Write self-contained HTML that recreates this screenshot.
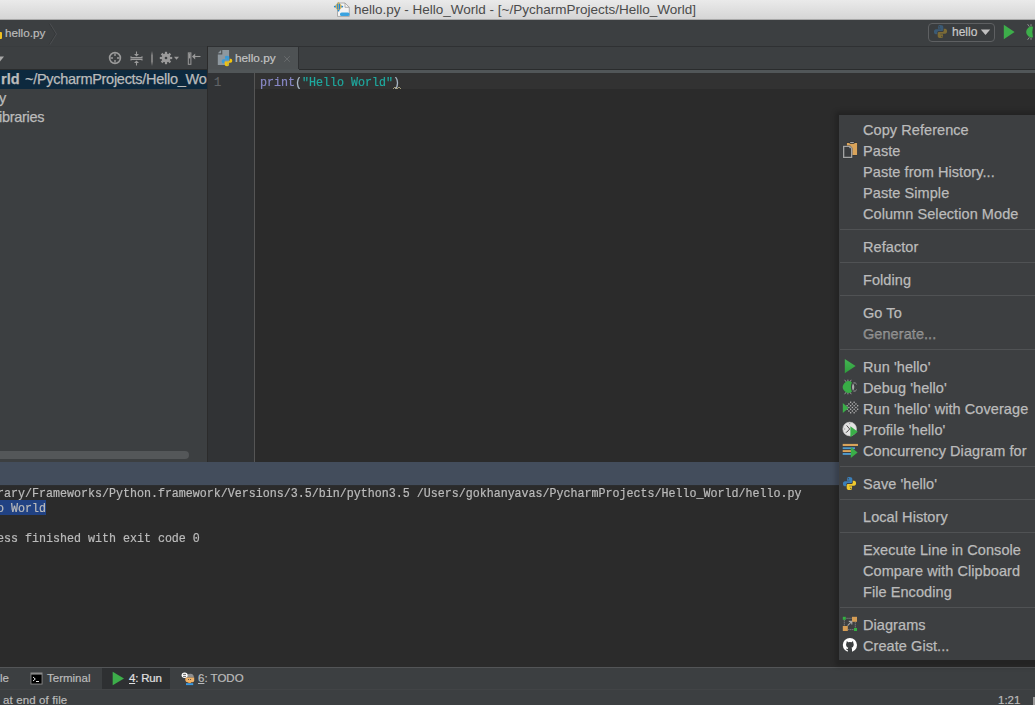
<!DOCTYPE html><html><head><meta charset="utf-8"><style>
*{margin:0;padding:0;box-sizing:border-box}
html,body{width:1035px;height:705px;overflow:hidden;background:#3C3F41;font-family:"Liberation Sans",sans-serif;position:relative}
.a{position:absolute;display:block}
.mono{font-family:"Liberation Mono",monospace}
.txt{color:#BBBBBB;white-space:nowrap;-webkit-text-stroke:0.2px currentColor}
.mi{position:absolute;left:24px;height:21px;line-height:21px;font-size:14.5px;letter-spacing:0.07px;color:#BBBBBB;white-space:nowrap;-webkit-text-stroke:0.25px #BBBBBB}
.sep{position:absolute;left:1px;width:300px;height:1px;background:#505254}
.tr{position:absolute;height:19px;line-height:19px;font-size:14.5px;letter-spacing:-0.28px;color:#BBBBBB;white-space:nowrap;-webkit-text-stroke:0.25px #BBBBBB}
</style></head><body>
<div class="a" style="left:0;top:0;width:1035px;height:20px;background:linear-gradient(#EAEAEA,#D4D4D4)"></div>
<div class="a" style="left:0;top:19px;width:1035px;height:1px;background:#A8A8A8"></div>
<svg class="a" style="left:333px;top:1px" width="18" height="17" viewBox="0 0 18 17"><path d="M4.5 2H12L16.3 6.3V15.4H4.5Z" fill="#F4F4F4" stroke="#9C9C9C" stroke-width="0.8"/><path d="M12 2V6.3H16.3" fill="none" stroke="#9C9C9C" stroke-width="0.8"/><rect x="7" y="11.5" width="9.5" height="3.6" rx="1.6" fill="#3BA3E0"/><path d="M5.5 0.8L9.6 5.6L5.5 10.4L1.4 5.6Z" fill="#C9B26A"/><rect x="4.2" y="2.8" width="1" height="5.6" fill="#1E88D8"/><rect x="6" y="2.8" width="1" height="5.6" fill="#1E88D8"/><circle cx="1.8" cy="5.6" r="0.9" fill="#1E88D8"/><circle cx="9.3" cy="5.6" r="0.9" fill="#1E88D8"/><circle cx="5.5" cy="9.6" r="0.9" fill="#1E88D8"/></svg>
<div class="a" style="left:354px;top:2px;font-size:13.5px;line-height:16px;color:#4B4B4B;white-space:nowrap">hello.py - Hello_World - [~/PycharmProjects/Hello_World]</div>
<div class="a" style="left:0;top:20px;width:1035px;height:26px;background:#3C3F41"></div>
<div class="a" style="left:-2px;top:32px;width:4px;height:7px;background:#F0C020;border-radius:1px"></div>
<div class="a txt" style="left:5px;top:25px;font-size:11.7px;line-height:16px">hello.py</div>
<svg class="a" style="left:48px;top:23px" width="10" height="22" viewBox="0 0 10 22"><path d="M1 0.5L7.5 11L1 21.5" fill="none" stroke="#35383A" stroke-width="1"/><path d="M2 0.5L8.5 11L2 21.5" fill="none" stroke="#505355" stroke-width="0.8"/></svg>
<div class="a" style="left:928px;top:23px;width:67px;height:19px;border:1px solid #5E6062;border-radius:4px;background:#3A3D3F"></div>
<svg class="a" style="left:933px;top:24px" width="15" height="15" viewBox="0 0 16 16"><path d="M8 1C5.2 1 5.3 2.2 5.3 3.2V5H8.3V5.6H3.2C1.8 5.6 1 6.8 1 8.3C1 9.9 1.7 11 3 11H4.5V9.2C4.5 8.1 5.3 7.4 6.3 7.4H9.5C10.4 7.4 11 6.7 11 5.8V3.2C11 2 10.1 1 8 1Z" fill="#3B5A74"/><path d="M8 15C10.8 15 10.7 13.8 10.7 12.8V11H7.7V10.4H12.8C14.2 10.4 15 9.2 15 7.7C15 6.1 14.3 5 13 5H11.5V6.8C11.5 7.9 10.7 8.6 9.7 8.6H6.5C5.6 8.6 5 9.3 5 10.2V12.8C5 14 5.9 15 8 15Z" fill="#7C6B36"/><circle cx="6.6" cy="2.9" r="0.7" fill="#3C3F41"/><circle cx="9.4" cy="13.1" r="0.7" fill="#3C3F41"/></svg>
<div class="a txt" style="left:952px;top:24px;font-size:12px;line-height:16px;color:#C8C8C8">hello</div>
<svg class="a" style="left:980px;top:29px" width="11" height="7" viewBox="0 0 11 7"><path d="M0.8 0.5H10.2L5.5 6Z" fill="#C0C0C0"/></svg>
<svg class="a" style="left:1003px;top:24px" width="13" height="16" viewBox="0 0 13 16"><path d="M0.8 0.8L11.6 8L0.8 15.2Z" fill="#3DAE4A"/></svg>
<svg class="a" style="left:1024px;top:23px" width="14" height="18" viewBox="0 0 14 18"><g stroke="#9A9A9A" stroke-width="0.9"><path d="M3.6 1.2L5.4 3.6M3.6 16.8L5.4 14.4M7 1.2V3.4M7 16.8V14.6"/></g><path d="M9 3.8A5.4 5.4 0 1 0 9 14.2Q7.6 9 9 3.8Z" fill="#3DAE4A"/></svg>
<div class="a" style="left:0;top:46px;width:207px;height:1px;background:#393C3E"></div>
<div class="a" style="left:207px;top:46px;width:828px;height:1px;background:#2F3133"></div>
<svg class="a" style="left:-4px;top:56px" width="8" height="6" viewBox="0 0 8 6"><path d="M0 0.5H8L4 5.5Z" fill="#A8A8A8"/></svg>
<svg class="a" style="left:108px;top:51px" width="14" height="14" viewBox="0 0 14 14"><circle cx="7" cy="7" r="5.4" fill="none" stroke="#9A9A9A" stroke-width="1.6"/><path d="M7 2.5V5M7 9V11.5M2.5 7H5M9 7H11.5" stroke="#9A9A9A" stroke-width="1.4"/></svg>
<svg class="a" style="left:130px;top:51px" width="13" height="15" viewBox="0 0 13 15"><path d="M1 5.2V6.6H12V5.2M1 9.6V8.4H12V9.6" fill="none" stroke="#9A9A9A" stroke-width="1.1"/><path d="M6.5 0.5V5" stroke="#9A9A9A" stroke-width="1.1"/><path d="M4 3L9 3L6.5 5.6Z" fill="#9A9A9A"/><path d="M6.5 10V14.5" stroke="#9A9A9A" stroke-width="1.1"/><path d="M4 12L9 12L6.5 9.4Z" fill="#9A9A9A"/></svg>
<div class="a" style="left:151px;top:51px;width:2px;height:15px;background:linear-gradient(#3C3F41,#7E7E7E 30%,#7E7E7E 70%,#3C3F41)"></div>
<svg class="a" style="left:159px;top:51px" width="22" height="14" viewBox="0 0 22 14"><g fill="#9A9A9A"><circle cx="7" cy="7" r="4.4"/><rect x="5.9" y="0.8" width="2.2" height="12.4"/><rect x="0.8" y="5.9" width="12.4" height="2.2"/><rect x="5.9" y="0.8" width="2.2" height="12.4" transform="rotate(45 7 7)"/><rect x="0.8" y="5.9" width="12.4" height="2.2" transform="rotate(45 7 7)"/></g><circle cx="7" cy="7" r="1.3" fill="#3C3F41"/><path d="M15 5.8H20L17.5 8.8Z" fill="#9A9A9A"/></svg>
<svg class="a" style="left:187px;top:52px" width="15" height="13" viewBox="0 0 15 13"><rect x="1.3" y="0.9" width="2.6" height="11.4" fill="none" stroke="#9A9A9A" stroke-width="1"/><rect x="1.8" y="1.4" width="1.6" height="5" fill="#9A9A9A"/><path d="M6 4.5H13.5" stroke="#9A9A9A" stroke-width="1.1"/><path d="M5 4.5L8.2 1.6V7.4Z" fill="#9A9A9A"/></svg>
<div class="a" style="left:207px;top:46px;width:1px;height:416px;background:#2B2B2B"></div>
<div class="a" style="left:208px;top:47px;width:90px;height:23px;background:#4E5254"></div>
<div class="a" style="left:298px;top:47px;width:1px;height:23px;background:#2F3133"></div>
<div class="a" style="left:0;top:69px;width:208px;height:1px;background:#2A2C2D"></div>
<div class="a" style="left:299px;top:69px;width:736px;height:1px;background:#2A2C2D"></div>
<div class="a" style="left:208px;top:69px;width:91px;height:1px;background:#4F5456"></div>
<div class="a" style="left:208px;top:70px;width:827px;height:3px;background:#515658"></div>
<svg class="a" style="left:217px;top:49px" width="17" height="18" viewBox="0 0 17 18"><path d="M5.3 1H12.1V16H0.8V5.5H5.3Z" fill="#8E989F"/><path d="M0.8 4.3L4.1 1V4.3Z" fill="#8E989F"/></svg>
<svg class="a" style="left:221px;top:55px" width="12" height="12" viewBox="0 0 16 16"><path d="M8 1C5.2 1 5.3 2.2 5.3 3.2V5H8.3V5.6H3.2C1.8 5.6 1 6.8 1 8.3C1 9.9 1.7 11 3 11H4.5V9.2C4.5 8.1 5.3 7.4 6.3 7.4H9.5C10.4 7.4 11 6.7 11 5.8V3.2C11 2 10.1 1 8 1Z" fill="#3A9AD6"/><path d="M8 15C10.8 15 10.7 13.8 10.7 12.8V11H7.7V10.4H12.8C14.2 10.4 15 9.2 15 7.7C15 6.1 14.3 5 13 5H11.5V6.8C11.5 7.9 10.7 8.6 9.7 8.6H6.5C5.6 8.6 5 9.3 5 10.2V12.8C5 14 5.9 15 8 15Z" fill="#F2C40C"/><circle cx="6.6" cy="2.9" r="0.7" fill="#3A9AD6"/><circle cx="9.4" cy="13.1" r="0.7" fill="#3A9AD6"/></svg>
<div class="a txt" style="left:235px;top:50px;font-size:11.8px;line-height:16px;color:#C4C4C4">hello.py</div>
<svg class="a" style="left:283px;top:55px" width="8" height="8" viewBox="0 0 8 8"><path d="M1.2 1.2L6.8 6.8M6.8 1.2L1.2 6.8" stroke="#676A6C" stroke-width="1"/></svg>
<div class="a" style="left:0;top:70px;width:207px;height:19px;background:#0D293E"></div>
<div class="tr" style="left:1px;top:70px;font-weight:bold;letter-spacing:0px">rld</div>
<div class="a" style="left:0;top:70px;width:207px;height:19px;overflow:hidden"><div class="tr" style="left:25px;top:0">~/PycharmProjects/Hello_World</div></div>
<div class="tr" style="left:-1px;top:89px">y</div>
<div class="tr" style="left:-1px;top:108px">ibraries</div>
<div class="a" style="left:-10px;top:451px;width:199px;height:8px;border-radius:4px;background:#545759"></div>
<div class="a" style="left:208px;top:73px;width:46px;height:389px;background:#313335"></div>
<div class="a" style="left:254px;top:73px;width:1px;height:389px;background:#555555"></div>
<div class="a" style="left:255px;top:73px;width:780px;height:389px;background:#2B2B2B"></div>
<div class="a" style="left:208px;top:73px;width:46px;height:16px;background:#313335"></div>
<div class="a" style="left:255px;top:73px;width:780px;height:16px;background:#323232"></div>
<div class="a mono" style="left:214px;top:76px;font-size:12px;line-height:15px;color:#606366;-webkit-text-stroke:0.2px currentColor">1</div>
<div class="a mono" style="left:260px;top:76px;font-size:11.67px;line-height:15px;color:#A9B7C6;white-space:pre;-webkit-text-stroke:0.2px currentColor;transform:scaleY(1.1);transform-origin:0 10.6px"><span style="color:#8888C6">print</span>(<span style="color:#1FA99F">"Hello World"</span>)</div>
<svg class="a" style="left:393px;top:86px" width="8" height="4" viewBox="0 0 8 4"><path d="M0 3L2 1L4 3L6 1L8 3" fill="none" stroke="#BCB48A" stroke-width="0.8"/></svg>
<div class="a" style="left:0;top:462px;width:1035px;height:23px;background:#434D5C"></div>
<div class="a" style="left:0;top:485px;width:1035px;height:1px;background:#2C2E30"></div>
<div class="a" style="left:0;top:486px;width:1035px;height:181px;background:#2B2B2B"></div>
<div class="a mono" style="left:-3px;top:487px;font-size:11.67px;line-height:15px;color:#BBBBBB;white-space:pre;-webkit-text-stroke:0.2px #BBBBBB;transform:scaleY(1.1);transform-origin:0 10.6px">rary/Frameworks/Python.framework/Versions/3.5/bin/python3.5 /Users/gokhanyavas/PycharmProjects/Hello_World/hello.py</div>
<div class="a" style="left:0;top:500px;width:46px;height:15px;background:#214283"></div>
<div class="a mono" style="left:-3px;top:502px;font-size:11.67px;line-height:15px;color:#BBBBBB;white-space:pre;-webkit-text-stroke:0.2px #BBBBBB;transform:scaleY(1.1);transform-origin:0 10.6px">o World</div>
<div class="a mono" style="left:-3px;top:532px;font-size:11.67px;line-height:15px;color:#BBBBBB;white-space:pre;-webkit-text-stroke:0.2px #BBBBBB;transform:scaleY(1.1);transform-origin:0 10.6px">ess finished with exit code 0</div>
<div class="a" style="left:0;top:667px;width:1035px;height:22px;background:#3C3F41"></div>
<div class="a" style="left:0;top:667px;width:1035px;height:1px;background:#535557"></div>
<div class="a" style="left:102px;top:668px;width:68px;height:21px;background:#2E3032"></div>
<div class="a" style="left:0px;top:670px;font-size:11.5px;line-height:16px;color:#BBBBBB;white-space:nowrap;-webkit-text-stroke:0.2px currentColor">le</div>
<svg class="a" style="left:30px;top:672px" width="13" height="13" viewBox="0 0 13 13"><rect x="0.5" y="0.5" width="12" height="12" fill="#8A8A8A"/><rect x="1.4" y="2.6" width="10.2" height="9" fill="#000"/><path d="M3 5L5.3 7L3 9" fill="none" stroke="#FFF" stroke-width="0.9"/><path d="M6 9.5H9" stroke="#FFF" stroke-width="0.9"/></svg>
<div class="a" style="left:47px;top:670px;font-size:11.5px;line-height:16px;color:#BBBBBB;white-space:nowrap;-webkit-text-stroke:0.2px currentColor">Terminal</div>
<svg class="a" style="left:112px;top:671px" width="13" height="15" viewBox="0 0 13 15"><path d="M0.7 0.7L12 7.5L0.7 14.3Z" fill="#3DAE4A"/></svg>
<div class="a" style="left:129px;top:670px;font-size:11.5px;line-height:16px;color:#BBBBBB;white-space:nowrap;-webkit-text-stroke:0.2px currentColor;color:#E0E0E0;letter-spacing:-0.2px"><u>4</u>: Run</div>
<svg class="a" style="left:181px;top:672px" width="15" height="15" viewBox="0 0 15 15"><path d="M5.2 3.6Q5.4 1.8 9.4 1.8Q12.9 1.9 12.9 5.6H5.6Z" fill="#8E8E8E"/><path d="M4.6 5.4H13.2V8.6Q13.2 10.3 11.5 10.3H6.2Q4.6 10.3 4.6 8.6Z" fill="#F0B36A"/><path d="M4.4 6.6H5.4V8.4H4.4Z" fill="#E6A65C"/><circle cx="7.6" cy="7.5" r="0.55" fill="#3A3A3A"/><circle cx="9.6" cy="7.5" r="0.55" fill="#3A3A3A"/><rect x="7.3" y="9.8" width="2.6" height="1.2" fill="#F5A44A"/><path d="M5 11.2H12.2V13.1H5Z" fill="#3D9AE0"/><ellipse cx="3.6" cy="3.2" rx="3" ry="2.7" fill="#FFFFFF"/><path d="M2.1 2.4H5M2.1 4.4H5" stroke="#3A3A3A" stroke-width="0.8"/></svg>
<div class="a" style="left:198px;top:670px;font-size:11.5px;line-height:16px;color:#BBBBBB;white-space:nowrap;-webkit-text-stroke:0.2px currentColor"><u>6</u>: TODO</div>
<div class="a" style="left:0;top:689px;width:1035px;height:16px;background:#3C3F41"></div>
<div class="a" style="left:0;top:689px;width:1035px;height:1px;background:#424446"></div>
<div class="a" style="left:3px;top:692px;font-size:11.5px;line-height:16px;color:#BBBBBB;white-space:nowrap;-webkit-text-stroke:0.2px currentColor;letter-spacing:0.12px">at end of file</div>
<div class="a" style="left:998px;top:692px;font-size:11.5px;line-height:16px;color:#BBBBBB;white-space:nowrap;-webkit-text-stroke:0.2px currentColor">1:21</div>
<div class="a" style="left:1033px;top:697px;width:2px;height:8px;background:#9A9A9A"></div>
<div class="a" style="left:835px;top:111px;width:210px;height:556px;background:rgba(0,0,0,0.18);border-radius:4px;filter:blur(2px)"></div>
<div class="a" style="left:839px;top:115px;width:230px;height:545px;background:#3D3F41;overflow:hidden">
<div class="mi" style="top:5px">Copy Reference</div>
<div class="mi" style="top:26px">Paste</div>
<svg class="a" style="left:3px;top:26px" width="18" height="18" viewBox="0 0 18 18"><rect x="4.6" y="1.6" width="10.8" height="12.8" fill="#2E3032"/><rect x="4.9" y="2" width="10.2" height="12" fill="#D9A35A"/><rect x="7.6" y="0.6" width="4.8" height="2.2" fill="#2E3032"/><rect x="8.2" y="1" width="3.6" height="1" fill="#A5A5A5"/><path d="M0.9 4.6H8.1L10.4 6.9V17.2H0.9Z" fill="#2E3032"/><path d="M1.65 5.35H7.7L9.65 7.3V16.45H1.65Z" fill="#3A3C3E" stroke="#A3A3A3" stroke-width="1.3"/><rect x="7.3" y="6" width="1.1" height="1.1" fill="#A3A3A3"/></svg>
<div class="mi" style="top:47px">Paste from History...</div>
<div class="mi" style="top:68px">Paste Simple</div>
<div class="mi" style="top:89px">Column Selection Mode</div>
<div class="sep" style="top:114px"></div>
<div class="mi" style="top:122px">Refactor</div>
<div class="sep" style="top:147px"></div>
<div class="mi" style="top:155px">Folding</div>
<div class="sep" style="top:180px"></div>
<div class="mi" style="top:188px">Go To</div>
<div class="mi" style="top:209px;color:#808080">Generate...</div>
<div class="sep" style="top:234px"></div>
<div class="mi" style="top:242px">Run &#39;hello&#39;</div>
<svg class="a" style="left:3px;top:242px" width="18" height="18" viewBox="0 0 18 18"><defs><linearGradient id="gr" x1="0" y1="0" x2="0" y2="1"><stop offset="0" stop-color="#45B553"/><stop offset="1" stop-color="#2E9E3C"/></linearGradient></defs><path d="M2.8 1.9L13.6 9L2.8 16.2Z" fill="url(#gr)"/></svg>
<div class="mi" style="top:263px">Debug &#39;hello&#39;</div>
<svg class="a" style="left:3px;top:263px" width="18" height="18" viewBox="0 0 18 18"><g stroke="#9E9E9E" stroke-width="0.9" fill="none"><path d="M2.6 1.8L4.2 3.9M5.9 1.6V3.6M9.2 1.8L8 3.9M2.6 16.2L4.2 14.1M5.9 16.4V14.4M9.2 16.2L8 14.1"/><path d="M11.5 4.8Q13.8 4.6 14.7 6.3M11.5 13.2Q13.8 13.4 14.7 11.7"/></g><path d="M9.9 4.2A5.8 5.8 0 1 0 9.9 13.8Q7.9 9 9.9 4.2Z" fill="#38AD46"/><path d="M11 5.2Q13.6 9 11 12.8Q9 9 11 5.2Z" fill="#AAAAAA"/></svg>
<div class="mi" style="top:284px">Run &#39;hello&#39; with Coverage</div>
<svg class="a" style="left:3px;top:284px" width="18" height="18" viewBox="0 0 18 18"><rect x="8.00" y="2.60" width="1.3" height="1.3" fill="#B8B8B8"/><rect x="11.50" y="2.60" width="1.3" height="1.3" fill="#B8B8B8"/><rect x="6.25" y="4.35" width="1.3" height="1.3" fill="#B8B8B8"/><rect x="9.75" y="4.35" width="1.3" height="1.3" fill="#B8B8B8"/><rect x="13.25" y="4.35" width="1.3" height="1.3" fill="#B8B8B8"/><rect x="4.50" y="6.10" width="1.3" height="1.3" fill="#B8B8B8"/><rect x="8.00" y="6.10" width="1.3" height="1.3" fill="#B8B8B8"/><rect x="11.50" y="6.10" width="1.3" height="1.3" fill="#B8B8B8"/><rect x="15.00" y="6.10" width="1.3" height="1.3" fill="#B8B8B8"/><rect x="2.75" y="7.85" width="1.3" height="1.3" fill="#B8B8B8"/><rect x="6.25" y="7.85" width="1.3" height="1.3" fill="#B8B8B8"/><rect x="9.75" y="7.85" width="1.3" height="1.3" fill="#B8B8B8"/><rect x="13.25" y="7.85" width="1.3" height="1.3" fill="#B8B8B8"/><rect x="4.50" y="9.60" width="1.3" height="1.3" fill="#B8B8B8"/><rect x="8.00" y="9.60" width="1.3" height="1.3" fill="#B8B8B8"/><rect x="11.50" y="9.60" width="1.3" height="1.3" fill="#B8B8B8"/><rect x="15.00" y="9.60" width="1.3" height="1.3" fill="#B8B8B8"/><rect x="6.25" y="11.35" width="1.3" height="1.3" fill="#B8B8B8"/><rect x="9.75" y="11.35" width="1.3" height="1.3" fill="#B8B8B8"/><rect x="13.25" y="11.35" width="1.3" height="1.3" fill="#B8B8B8"/><rect x="8.00" y="13.10" width="1.3" height="1.3" fill="#B8B8B8"/><rect x="11.50" y="13.10" width="1.3" height="1.3" fill="#B8B8B8"/><path d="M0.8 4L6.6 9L0.8 14Z" fill="#3AAE48"/></svg>
<div class="mi" style="top:305px">Profile &#39;hello&#39;</div>
<svg class="a" style="left:3px;top:305px" width="18" height="18" viewBox="0 0 18 18"><circle cx="7.7" cy="9" r="6.9" fill="#E2E2E2"/><circle cx="7.7" cy="9" r="6.9" fill="none" stroke="#BDBDBD" stroke-width="0.6"/><path d="M4.6 5.4L7.7 9L4.4 12.6" stroke="#2A2A2A" stroke-width="0.8" fill="none"/><path d="M7.7 3V4.2M2 9H3.2M3.6 12.3L4.4 11.6" stroke="#777" stroke-width="0.7"/><path d="M8.4 6.3L15.8 11.8L8.4 17.2Z" fill="#3AAE48"/></svg>
<div class="mi" style="top:326px">Concurrency Diagram for</div>
<svg class="a" style="left:3px;top:326px" width="18" height="18" viewBox="0 0 18 18"><rect x="0.7" y="2.9" width="15.3" height="2.1" fill="#D9A35A"/><rect x="0.7" y="6.3" width="12.3" height="1.8" fill="#4E9ACD"/><rect x="0.7" y="9.1" width="8.5" height="1.9" fill="#D9A35A"/><rect x="0.7" y="12" width="8.5" height="1.9" fill="#4E9ACD"/><path d="M8.8 6L15.6 11.5L8.8 17Z" fill="#3AAE48"/></svg>
<div class="sep" style="top:351px"></div>
<div class="mi" style="top:359px">Save &#39;hello&#39;</div>
<svg class="a" style="left:3px;top:361px;transform:scale(1.0)" width="15" height="15" viewBox="0 0 16 16"><path d="M8 1C5.2 1 5.3 2.2 5.3 3.2V5H8.3V5.6H3.2C1.8 5.6 1 6.8 1 8.3C1 9.9 1.7 11 3 11H4.5V9.2C4.5 8.1 5.3 7.4 6.3 7.4H9.5C10.4 7.4 11 6.7 11 5.8V3.2C11 2 10.1 1 8 1Z" fill="#3C7FB8"/><path d="M8 15C10.8 15 10.7 13.8 10.7 12.8V11H7.7V10.4H12.8C14.2 10.4 15 9.2 15 7.7C15 6.1 14.3 5 13 5H11.5V6.8C11.5 7.9 10.7 8.6 9.7 8.6H6.5C5.6 8.6 5 9.3 5 10.2V12.8C5 14 5.9 15 8 15Z" fill="#EFC92E"/><circle cx="6.6" cy="2.9" r="0.7" fill="#3C3F41"/><circle cx="9.4" cy="13.1" r="0.7" fill="#3C3F41"/></svg>
<div class="sep" style="top:384px"></div>
<div class="mi" style="top:392px">Local History</div>
<div class="sep" style="top:417px"></div>
<div class="mi" style="top:425px">Execute Line in Console</div>
<div class="mi" style="top:446px">Compare with Clipboard</div>
<div class="mi" style="top:467px">File Encoding</div>
<div class="sep" style="top:492px"></div>
<div class="mi" style="top:500px">Diagrams</div>
<svg class="a" style="left:3px;top:500px" width="18" height="18" viewBox="0 0 18 18"><rect x="0.8" y="1.8" width="3" height="3" fill="#33B043"/><rect x="12" y="13" width="3" height="3" fill="#33B043"/><rect x="10" y="1.8" width="5" height="5" fill="#D59D55"/><rect x="0.8" y="11" width="5" height="5" fill="#D59D55"/><path d="M4.6 3.3H9.4M13.3 7.4V12.4M6.4 14.6H11.4M2.3 5.4V10.4" stroke="#B5B5B5" stroke-width="0.8" stroke-dasharray="0.9 1.1"/><path d="M5.6 10.6L9.6 6.6M6.8 6.4H9.8V9.4" stroke="#A5A5A5" stroke-width="1.1" fill="none"/></svg>
<div class="mi" style="top:521px">Create Gist...</div>
<svg class="a" style="left:3px;top:521px" width="18" height="18" viewBox="0 0 18 18"><circle cx="7.9" cy="9" r="7.1" fill="#FFFFFF"/><path d="M4.8 4.9L6.2 6.2Q7.9 5.6 9.6 6.2L11 4.9L11.3 7.1Q11.9 7.9 11.7 9.2Q11.3 11.2 9.5 11.7Q10 12.2 10 13.2V16H5.8V14Q4.6 14.1 4 13L4.4 12.5Q5.1 13.3 5.8 13Q5.8 12.2 6.3 11.7Q4.5 11.2 4.1 9.2Q3.9 7.9 4.5 7.1Z" fill="#3C3F41"/></svg>
</div>
</body></html>
